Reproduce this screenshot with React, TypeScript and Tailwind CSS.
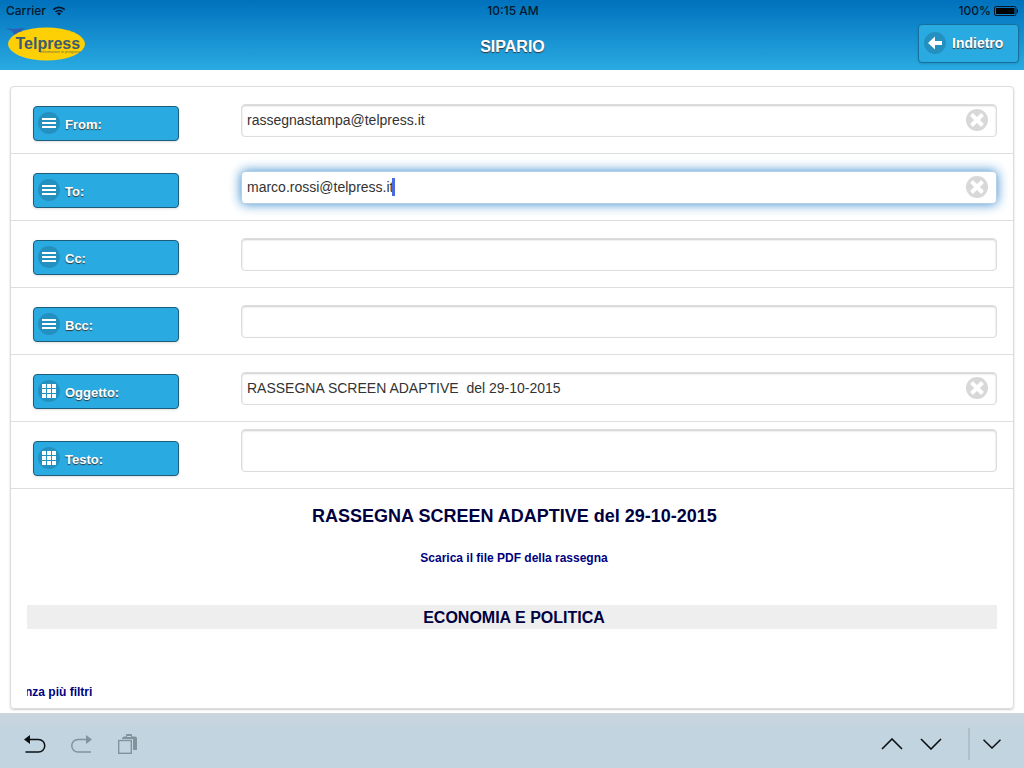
import { useState } from "react";
import type { ReactNode } from "react";
import clsx from "clsx";

type FieldName = "from" | "to" | "cc" | "bcc" | "subject" | "body";

type Field = {
  name: FieldName;
  label: string;
  icon: "bars" | "grid";
};

const FIELDS: Field[] = [
  { name: "from", label: "From:", icon: "bars" },
  { name: "to", label: "To:", icon: "bars" },
  { name: "cc", label: "Cc:", icon: "bars" },
  { name: "bcc", label: "Bcc:", icon: "bars" },
  { name: "subject", label: "Oggetto:", icon: "grid" },
  { name: "body", label: "Testo:", icon: "grid" },
];

const INITIAL_VALUES: Record<FieldName, string> = {
  from: "rassegnastampa@telpress.it",
  to: "marco.rossi@telpress.it",
  cc: "",
  bcc: "",
  subject: "RASSEGNA SCREEN ADAPTIVE  del 29-10-2015",
  body: "",
};

function IconDisc({ children }: { children: ReactNode }) {
  return (
    <svg viewBox="0 0 22 22" className="size-[22px] shrink-0" fill="#fff" aria-hidden="true">
      <circle cx="11" cy="11" r="11" fill="#2490c0" />
      {children}
    </svg>
  );
}

function BarsIcon() {
  return (
    <IconDisc>
      <path d="M4 6h14v2H4zM4 10h14v2H4zM4 14h14v2H4z" />
    </IconDisc>
  );
}

function GridIcon() {
  return (
    <IconDisc>
      <path d="M4 4h4v4H4zM9 4h4v4H9zM14 4h4v4h-4zM4 9h4v4H4zM9 9h4v4H9zM14 9h4v4h-4zM4 14h4v4H4zM9 14h4v4H9zM14 14h4v4h-4z" />
    </IconDisc>
  );
}

function Logo() {
  return (
    <svg viewBox="0 0 80 36" className="mb-1 h-9 w-20" role="img" aria-label="Telpress">
      <path d="M0 3C4 2 6 3 8 4L6 3l13-1-6 5-6 4C9 7 7 4 0 3z" fill="#2b5fb4" />
      <ellipse cx="40.500" cy="18" rx="38.500" ry="16.500" fill="#fdd006" />
      <text x="9.500" y="23" fontSize="16" fontWeight="700" fill="#3c5a72">
        Telpress
      </text>
      <text x="34" y="26.500" fontSize="4" fill="#6b6f52">
        information in progress
      </text>
    </svg>
  );
}

function StatusBar() {
  return (
    <div className="grid h-[22px] grid-cols-[1fr_auto_1fr] items-center pr-[5px] pl-[6px] font-['Inter',sans-serif] text-xs font-medium text-[#04172b]">
      <div className="flex items-center gap-[6px]">
        <span>Carrier</span>
        <svg viewBox="0 0 14 10" className="h-[10px] w-[14px]" fill="none" stroke="currentColor" aria-hidden="true">
          <path d="M1.300 3.700a8.200 8.200 0 0 1 11.400 0M3.500 6a5 5 0 0 1 7 0" strokeWidth="1.700" />
          <path d="M7 9.600 4.900 7.500a3 3 0 0 1 4.200 0z" fill="currentColor" stroke="none" />
        </svg>
      </div>
      <span className="pl-px">10:15 AM</span>
      <div className="flex items-center justify-end gap-[3px]">
        <span>100%</span>
        <svg viewBox="0 0 25 10" className="h-[10px] w-[25px]" aria-hidden="true">
          <rect x=".5" y=".5" width="21.500" height="9" rx="1.500" fill="none" stroke="#04172b" />
          <rect x="2" y="2" width="18.500" height="6" rx=".5" />
          <path d="M23 3c1.300.3 1.300 3.700 0 4z" />
        </svg>
      </div>
    </div>
  );
}

function Header() {
  return (
    <header className="bg-linear-to-b from-[#0071bc] to-[#29abe2]">
      <StatusBar />
      <div className="grid h-12 grid-cols-[1fr_auto_1fr] items-center pr-[5px] pl-[6px]">
        <Logo />
        <h1 className="pt-0.5 text-base font-bold text-white [text-shadow:0_1px_1px_#333]">SIPARIO</h1>
        <button
          type="button"
          className="mb-1.5 flex h-[39px] w-[101px] items-center gap-[6px] justify-self-end rounded border border-[#17709c] bg-[#29abe2] px-[5px] text-sm font-bold text-white shadow-sm [text-shadow:0_1px_1px_#333]"
        >
          <IconDisc>
            <path d="M4 11 11 4.500V9h7v4h-7v4.500z" />
          </IconDisc>
          Indietro
        </button>
      </div>
    </header>
  );
}

type FieldRowProps = {
  field: Field;
  value: string;
  focused: boolean;
  onFocus: () => void;
  onChange: (value: string) => void;
};

function FieldRow({ field, value, focused, onFocus, onChange }: FieldRowProps) {
  const labelId = `${field.name}-label`;

  return (
    <div className="flex min-h-[67px] items-end border-b border-[#ddd] pr-4 pl-[22px]">
      <div className="w-[208px] shrink-0 pb-3">
        <button
          id={labelId}
          type="button"
          className="flex h-[35px] w-[146px] items-center gap-[5px] rounded border border-[#1d5d7c] bg-[#29abe2] pb-px pl-1 text-[13px] font-bold text-white shadow-sm [text-shadow:0_1px_1px_#333]"
        >
          {field.icon === "bars" ? <BarsIcon /> : <GridIcon />}
          <span className="pt-1">{field.label}</span>
        </button>
      </div>

      <div className="mb-4 min-w-0 grow">
        {field.name === "body" ? (
          <textarea
            aria-labelledby={labelId}
            value={value}
            onFocus={onFocus}
            onChange={(e) => onChange(e.target.value)}
            className="block h-[43px] w-full resize-none rounded border border-[#ddd] px-[5px] py-2 text-sm text-[#333] shadow-[inset_0_1px_2px_#ccc] outline-none"
          />
        ) : (
          <div
            className={clsx(
              "flex h-[33px] items-center rounded border bg-white pr-2 pb-0.5 pl-[5px]",
              focused
                ? "border-[#b5cfe6] shadow-[0_0_12px_#3388cc]"
                : "border-[#ddd] shadow-[inset_0_1px_2px_#ccc]"
            )}
          >
            <input
              type="text"
              aria-labelledby={labelId}
              value={value}
              onFocus={onFocus}
              onChange={(e) => onChange(e.target.value)}
              className={clsx(
                "min-w-0 bg-transparent text-sm text-[#333] caret-transparent outline-none",
                focused ? "field-sizing-content" : "grow"
              )}
            />
            {focused && <span className="-ml-px h-[18px] w-[3px] shrink-0 bg-[#4a6be0]" />}
            {value && (
              <button
                type="button"
                aria-label={`Clear ${field.label}`}
                onClick={() => onChange("")}
                className="ml-auto shrink-0"
              >
                <svg viewBox="0 0 22 22" className="size-[22px]" aria-hidden="true">
                  <circle cx="11" cy="11" r="11" fill="#d8d8d8" />
                  <path d="m5.500 5.500 11 11M16.500 5.500l-11 11" stroke="#fff" strokeWidth="4" />
                </svg>
              </button>
            )}
          </div>
        )}
      </div>
    </div>
  );
}

function Preview() {
  return (
    <section className="px-4 pt-[13px] pb-2 font-bold text-[#000040]">
      <h2 className="pl-[5px] text-center text-lg leading-7">RASSEGNA SCREEN ADAPTIVE del 29-10-2015</h2>
      <p className="mt-5 pl-1 text-center text-xs leading-4">
        <a href="#pdf" className="text-[#000080]">
          Scarica il file PDF della rassegna
        </a>
      </p>
      <h3 className="mt-[39px] bg-[#eee] pt-0.5 pl-1 text-center text-base leading-[22px]">ECONOMIA E POLITICA</h3>
      {/* headline runs off the left edge of its box */}
      <p className="mt-[55px] overflow-hidden -indent-[2px] text-xs leading-4 text-[#000080]">nza più filtri</p>
    </section>
  );
}

function ToolButton({ label, disabled, children }: { label: string; disabled?: boolean; children: ReactNode }) {
  return (
    <button type="button" aria-label={label} disabled={disabled} className="text-[#0b0f12] disabled:text-[#83939e]">
      {children}
    </button>
  );
}

function KeyboardBar() {
  return (
    <footer className="flex h-[55px] items-center justify-between bg-linear-to-b from-[#cad5de] to-[#c1d4e0] to-40% pt-[7px] pr-[23px] pl-6">
      <div className="flex items-center gap-[25px]">
        <ToolButton label="Undo">
          <svg viewBox="0 0 22 20" className="h-5 w-[22px]" fill="none" stroke="currentColor" strokeWidth="1.500">
            <path d="M4 5.500h10.500a6.200 6.200 0 0 1 0 12.500H1.500" />
            <path d="M0 5.500 6 1v9z" fill="currentColor" stroke="none" />
          </svg>
        </ToolButton>
        <ToolButton label="Redo" disabled>
          <svg viewBox="0 0 22 20" className="h-5 w-[22px]" fill="none" stroke="currentColor" strokeWidth="1.500">
            <path d="M17 5.500H7A6.200 6.200 0 0 0 7 18h13" />
            <path d="M21 5.500 15 1v9z" fill="currentColor" stroke="none" />
          </svg>
        </ToolButton>
        <ToolButton label="Paste" disabled>
          <svg viewBox="0 0 20 20" className="h-5 w-5" fill="none" stroke="currentColor">
            <rect x=".7" y="6.500" width="12.600" height="12.800" strokeWidth="1.400" />
            <path d="M4 5q0-2.500 2-2.500h2V1q0-1 1-1h4q1 0 1 1v1.500h3q2 0 2 2V16h-4V5z" fill="currentColor" stroke="none" />
            <path d="M9 2.500h4" stroke="#c7d5df" />
          </svg>
        </ToolButton>
      </div>

      <div className="flex items-center">
        <div className="flex items-center gap-[17px]">
          <ToolButton label="Previous field">
            <svg viewBox="0 0 22 12" className="h-3 w-[22px]" fill="none" stroke="currentColor" strokeWidth="1.600">
              <path d="m1 11 10-10 10 10" />
            </svg>
          </ToolButton>
          <ToolButton label="Next field">
            <svg viewBox="0 0 22 12" className="h-3 w-[22px]" fill="none" stroke="currentColor" strokeWidth="1.600">
              <path d="m1 1 10 10L21 1" />
            </svg>
          </ToolButton>
        </div>
        <span className="mr-[13px] ml-[26px] h-8 w-0.5 bg-[#b0bec8]" />
        <ToolButton label="Hide keyboard">
          <svg viewBox="0 0 18 10" className="h-[10px] w-[18px]" fill="none" stroke="currentColor" strokeWidth="1.500">
            <path d="m.5.700 8.500 8.300L17.500.700" />
          </svg>
        </ToolButton>
      </div>
    </footer>
  );
}

export default function App() {
  const [values, setValues] = useState(INITIAL_VALUES);
  const [focused, setFocused] = useState<FieldName>("to");

  return (
    <div className="flex min-h-screen flex-col bg-white font-['Liberation_Sans',Arial,sans-serif]">
      <Header />
      <main className="flex grow flex-col px-[10px] pt-4 pb-1">
        <form
          onSubmit={(e) => e.preventDefault()}
          className="grow rounded border border-[#ddd] shadow-[0_1px_2px_#ccc]"
        >
          {FIELDS.map((field) => (
            <FieldRow
              key={field.name}
              field={field}
              value={values[field.name]}
              focused={focused === field.name}
              onFocus={() => setFocused(field.name)}
              onChange={(value) => setValues({ ...values, [field.name]: value })}
            />
          ))}
          <Preview />
        </form>
      </main>
      <KeyboardBar />
    </div>
  );
}
